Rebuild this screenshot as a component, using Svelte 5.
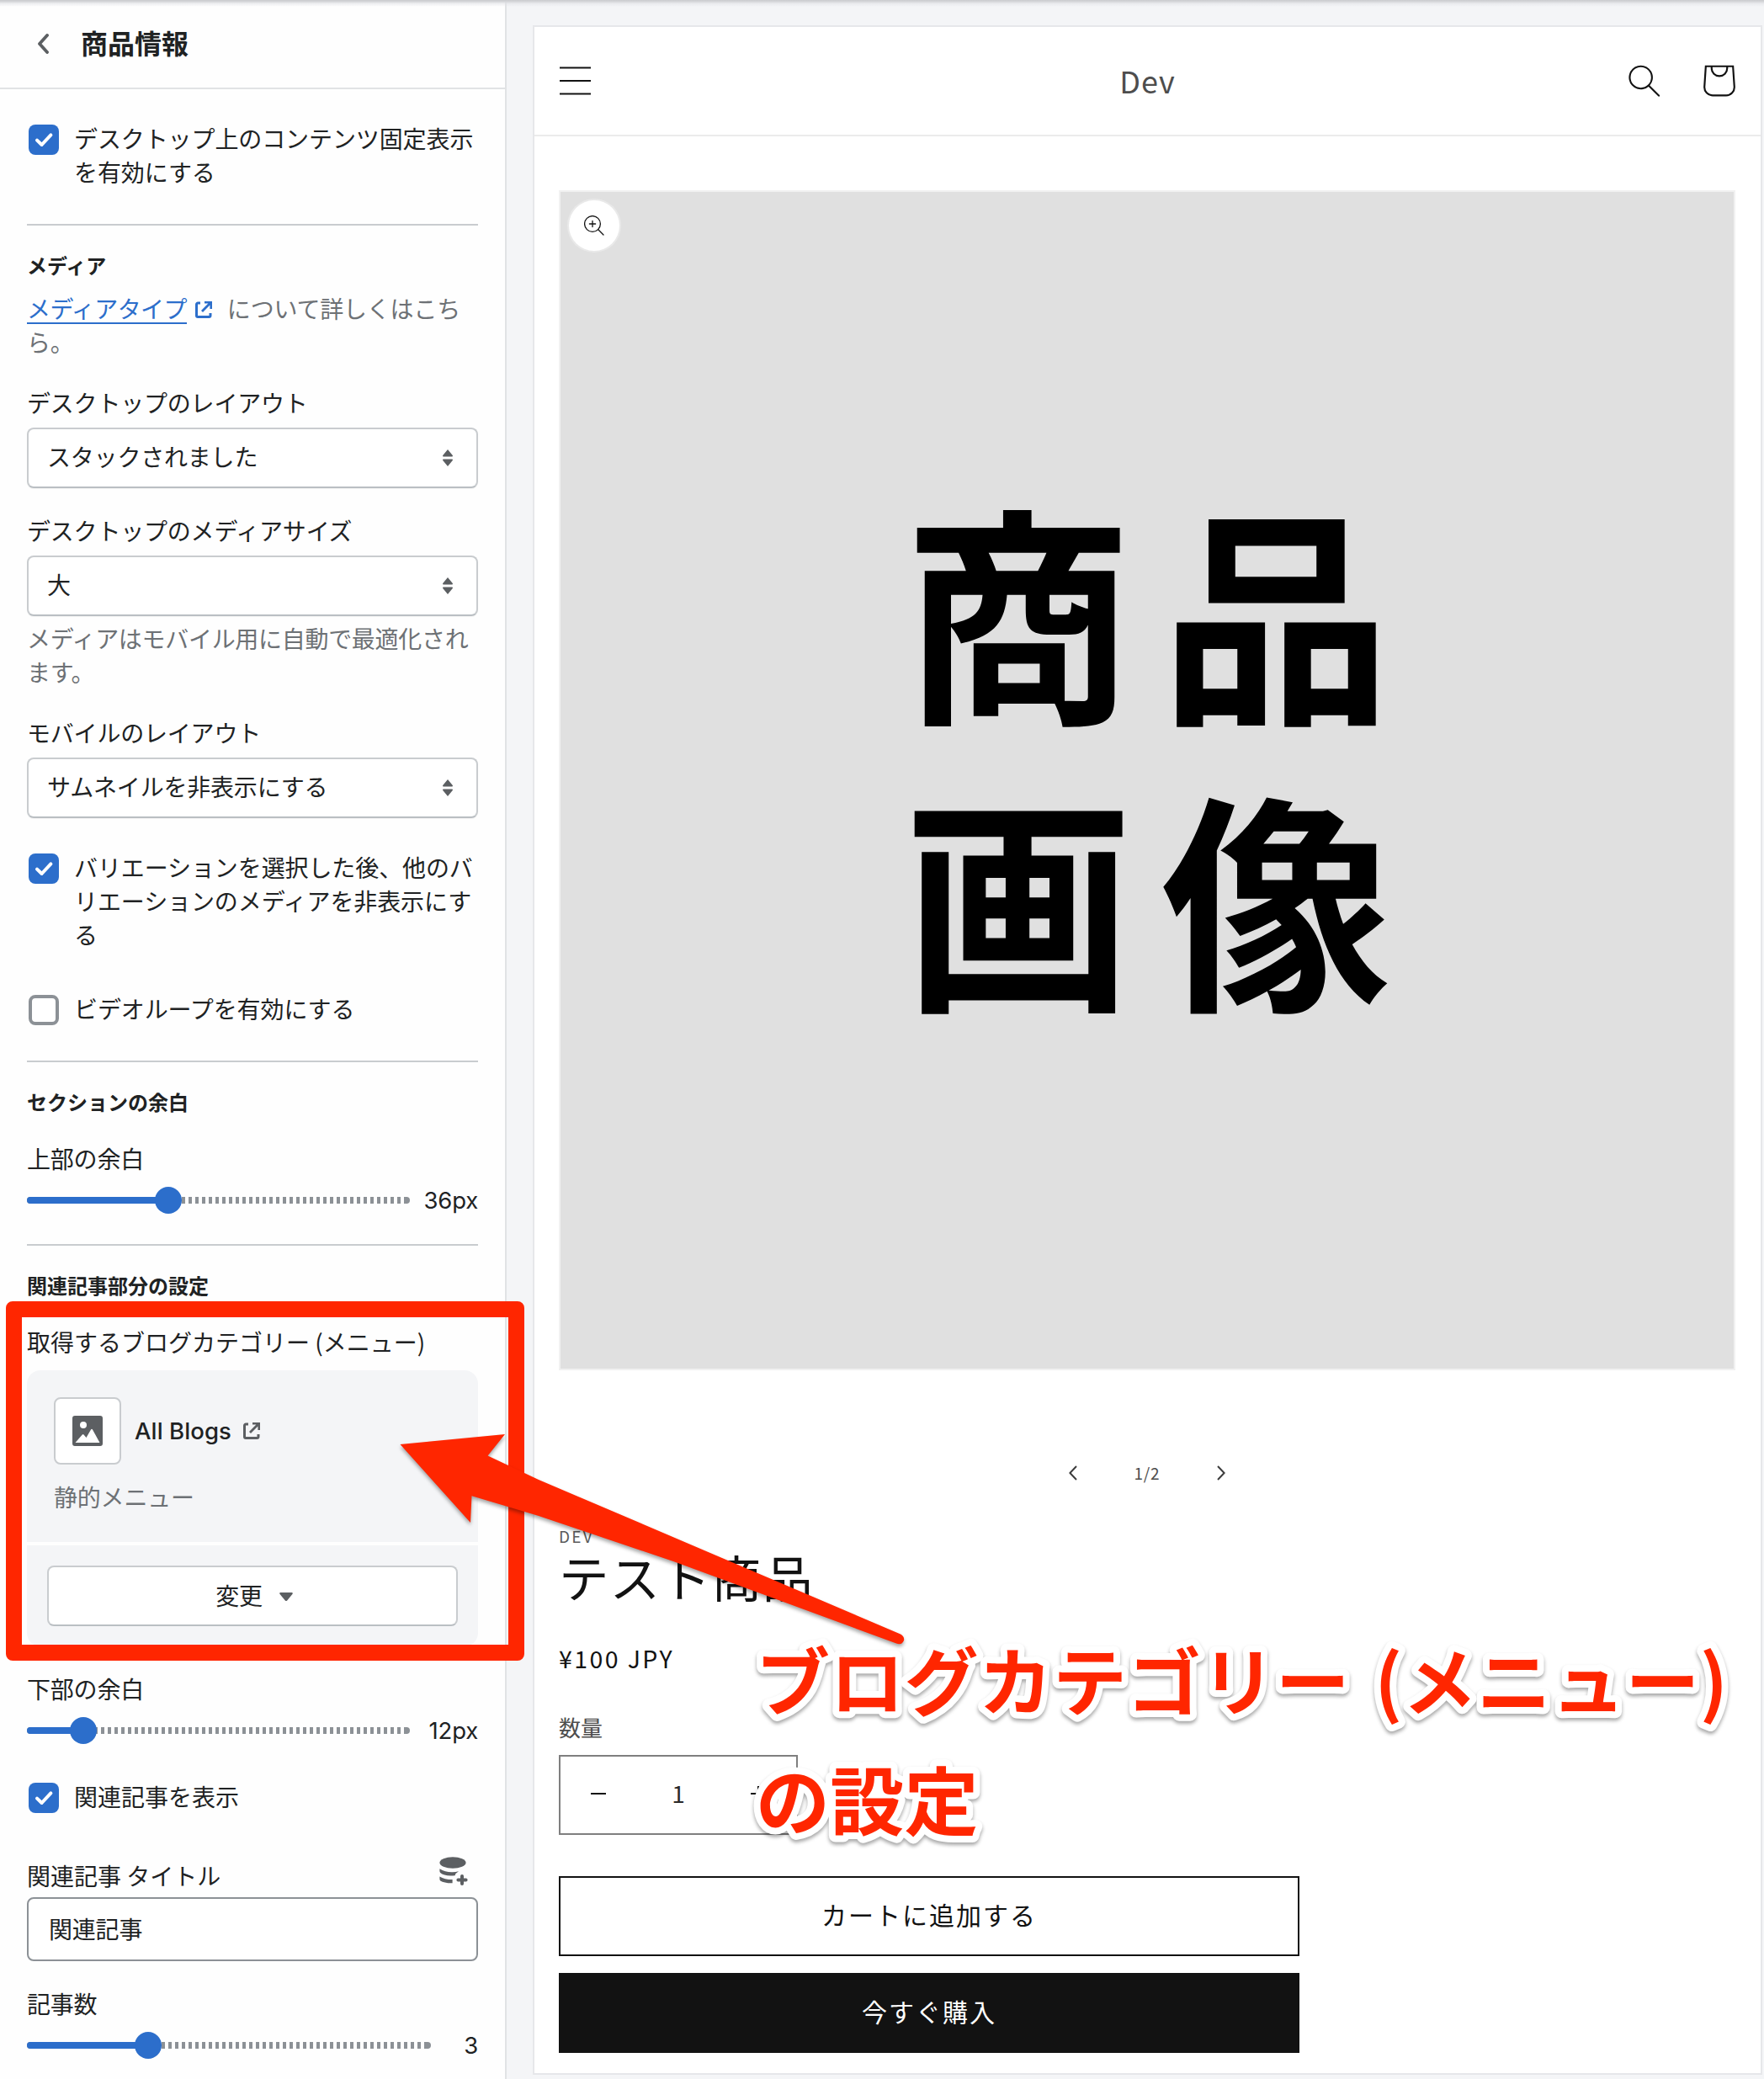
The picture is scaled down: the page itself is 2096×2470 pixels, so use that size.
<script>
  const selects = {
    desktop: 'スタックされました',
    size: '大',
    mobile: 'サムネイルを非表示にする'
  };
</script>

{#snippet check(on)}
  <span class="box" class:on>
    {#if on}
      <svg viewBox="0 0 36 36"><path d="M10 18.6 L15.6 24 L26.4 12.4" fill="none" stroke="#fff" stroke-width="4" stroke-linecap="round" stroke-linejoin="round" /></svg>
    {/if}
  </span>
{/snippet}

{#snippet external()}
  <svg class="ext" viewBox="0 0 20 20">
    <path d="M6 2H3.2A1.7 1.7 0 0 0 1.5 3.7V17A1.5 1.5 0 0 0 3 18.5H16.3A1.7 1.7 0 0 0 18 16.8V14" fill="none" stroke="currentColor" stroke-width="3" />
    <path d="M11 0H20V9H17.4V4.6L9 13L7 11L15.4 2.6H11Z" fill="currentColor" />
  </svg>
{/snippet}

{#snippet select(text)}
  <div class="select">
    <span>{text}</span>
    <svg viewBox="0 0 12 20"><path d="M6 0L12 7.2Q12 8.5 11 8.5H1Q0 8.5 0 7.2ZM6 20L12 12.8Q12 11.5 11 11.5H1Q0 11.5 0 12.8Z" fill="#5c5f62" /></svg>
  </div>
{/snippet}

{#snippet slider(width, fill, value)}
  <div class="slider">
    <div class="track" style="width:{width}px">
      <div class="fill" style="width:{fill}px"></div>
      <div class="thumb" style="left:{fill - 16}px"></div>
    </div>
    <span class="value">{value}</span>
  </div>
{/snippet}

<div class="page">
  <aside>
    <header>
      <svg class="back" viewBox="0 0 14 24"><path d="M12 2L3 12L12 22" fill="none" stroke="#5c5f62" stroke-width="3.8" stroke-linecap="round" stroke-linejoin="round" /></svg>
      <h1>商品情報</h1>
    </header>
    <div class="panel">
      <div class="check first">{@render check(true)}<p>デスクトップ上のコンテンツ固定表示<br />を有効にする</p></div>
      <hr class="g42" />
      <h2>メディア</h2>
      <p class="sub link-line"><a href="#media">メディアタイプ</a><span class="blue">{@render external()}</span>について詳しくはこち<br />ら。</p>
      <p class="label g32">デスクトップのレイアウト</p>
      {@render select(selects.desktop)}
      <p class="label g30">デスクトップのメディアサイズ</p>
      {@render select(selects.size)}
      <p class="sub help">メディアはモバイル用に自動で最適化され<br />ます。</p>
      <p class="label g32">モバイルのレイアウト</p>
      {@render select(selects.mobile)}
      <div class="check g38">{@render check(true)}<p>バリエーションを選択した後、他のバ<br />リエーションのメディアを非表示にす<br />る</p></div>
      <div class="check g48">{@render check(false)}<p>ビデオループを有効にする</p></div>
      <hr class="g42" />
      <h2>セクションの余白</h2>
      <p class="label g30">上部の余白</p>
      {@render slider(455, 168, '36px')}
      <hr class="g36" />
      <h2>関連記事部分の設定</h2>
      <p class="label g30 plain">取得するブログカテゴリー (メニュー)</p>
      <div class="card-top">
        <div class="resource">
          <div class="thumbnail">
            <svg viewBox="0 0 36 36"><path fill="#5c5f62" fill-rule="evenodd" d="M3 0H33A3 3 0 0 1 36 3V33A3 3 0 0 1 33 36H3A3 3 0 0 1 0 33V3A3 3 0 0 1 3 0ZM13 7A4 4 0 1 0 13 15A4 4 0 1 0 13 7ZM3.5 32H32.5L24 16.5Q23 15 22 16.5L16.5 26L13.5 22.5Q12.6 21.5 11.8 22.5Z" /></svg>
          </div>
          <strong>All Blogs</strong>
          {@render external()}
        </div>
        <p class="sub">静的メニュー</p>
      </div>
      <div class="card-bottom">
        <div class="button">変更<svg viewBox="0 0 16 10"><path d="M1.2 0H14.8Q16.4 .4 15.4 2L9.2 9.4Q8 10.4 6.8 9.4L.6 2Q-.4 .4 1.2 0Z" fill="#5c5f62" /></svg></div>
      </div>
      <p class="label g30">下部の余白</p>
      {@render slider(455, 67, '12px')}
      <div class="check g42 plain">{@render check(true)}<p>関連記事を表示</p></div>
      <div class="title-row">
        <p class="label plain">関連記事 タイトル</p>
        <svg viewBox="0 0 34 34" fill="#5c5f62">
          <ellipse cx="16" cy="7" rx="15.6" ry="6.8" />
          <path d="M.4 14.2Q7 18.4 15 18.3Q19 18.4 23 17.3Q19.3 19.4 18.6 22.2Q6 23.4 1.2 19Q.4 18 .4 16.8ZM.4 23.4Q6 27 15.6 27V31.2Q6 31.4 1.2 28.4Q.4 27.4 .4 26.2Z" />
          <path d="M27 23V32M22.4 27.5H31.6" stroke="#5c5f62" stroke-width="4" stroke-linecap="round" />
        </svg>
      </div>
      <div class="input">関連記事</div>
      <p class="label g30">記事数</p>
      {@render slider(480, 144, '3')}
    </div>
  </aside>

  <main>
    <div class="shop">
      <div class="shop-header">
        <svg class="menu" viewBox="0 0 37 34"><path d="M.5 1.5H36.5M.5 17H36.5M.5 32.5H36.5" stroke="#121212" stroke-width="2" stroke-linecap="round" /></svg>
        <span class="brand">Dev</span>
        <div class="tools">
          <svg class="search" viewBox="0 0 18 19"><path fill="#121212" fill-rule="evenodd" d="M11.03 11.68A5.784 5.784 0 1 1 2.85 3.5a5.784 5.784 0 0 1 8.18 8.18zm.26 1.12a6.78 6.78 0 1 1 .72-.7l5.4 5.4a.5.5 0 1 1-.71.7l-5.41-5.4z" /></svg>
          <svg class="cart" viewBox="11.8 11.5 17.4 17.5"><path fill="#121212" fill-rule="evenodd" d="M15.75 11.8h-3.16l-.77 11.6a5 5 0 0 0 4.99 5.34h7.38a5 5 0 0 0 4.99-5.33L28.4 11.8zm0 1h-2.22l-.71 10.67a4 4 0 0 0 3.99 4.27h7.38a4 4 0 0 0 4-4.27l-.72-10.67h-2.22v.63a4.75 4.75 0 1 1-9.5 0zm8.5 0h-7.5v.63a3.75 3.75 0 1 0 7.5 0z" /></svg>
        </div>
      </div>
      <div class="content">
        <div class="media">
          <div class="zoom">
            <svg viewBox="0 0 24 24"><g fill="none" stroke="#121212" stroke-width="1.3" stroke-linecap="round"><circle cx="10" cy="10" r="9.4" /><path d="M16.8 16.8L23 23M10 6.4V13.6M6.4 10H13.6" /></g></svg>
          </div>
          <div class="placeholder"><span>商品</span><span>画像</span></div>
        </div>
        <div class="pager">
          <svg viewBox="0 0 10 18"><path d="M9 1L1.4 9L9 17" /></svg>
          <span>1/2</span>
          <svg viewBox="0 0 10 18"><path d="M1 1L8.6 9L1 17" /></svg>
        </div>
        <p class="vendor">DEV</p>
        <p class="name">テスト商品</p>
        <p class="price">¥100 JPY</p>
        <p class="qty-label">数量</p>
        <div class="qty">
          <svg viewBox="0 0 18 18"><path d="M0 9H18" /></svg>
          <span>1</span>
          <svg viewBox="0 0 18 18"><path d="M0 9H18M9 0V18" /></svg>
        </div>
        <div class="buy outline">カートに追加する</div>
        <div class="buy solid">今すぐ購入</div>
      </div>
    </div>
  </main>

  <div class="topshade"></div>
  <div class="frame"></div>
  <svg class="notes" viewBox="0 0 2096 2470">
    <path class="arrow" d="M475.5 1716L600 1704L579.6 1729.5L640 1758L841 1843.7L1070 1941.5Q1075 1944.5 1074 1949Q1071.500 1955 1065 1952.500L800 1855L640 1801L560.500 1777.300L559 1809Z" />
    <g class="caption">
      <text x="898" y="2031">ブログカテゴリー (メニュー)</text>
      <text x="898" y="2173">の設定</text>
    </g>
  </svg>
</div>

<style>
  :global(body) { margin: 0; background: #f4f5f8; }
  .page {
    position: relative; width: 2096px; height: 2470px; overflow: hidden;
    display: flex; background: #f4f5f7;
    font-family: "Noto Sans CJK JP", sans-serif; color: #202223;
  }
  .page :global(*) { box-sizing: border-box; }
  svg { display: block; flex: none; }
  p, h1, h2 { margin: 0; white-space: nowrap; }
  aside { width: 602px; height: 2470px; background: #fefefe; border-right: 2px solid #e1e3e5; font-size: 28px; line-height: 40px; letter-spacing: -.2px; flex: none; }
  header { height: 106px; border-bottom: 2px solid #e1e3e5; display: flex; align-items: center; padding-left: 44px; }
  .back { width: 14px; height: 24px; margin-right: 38px; }
  h1 { font-size: 32px; line-height: 40px; font-weight: 700; letter-spacing: 0; margin-bottom: 4px; }
  .panel { padding: 38px 32px 0; }
  .check { display: flex; gap: 18px; padding-left: 2px; letter-spacing: -.1px; }
  .box { width: 36px; height: 36px; border-radius: 8px; border: 4px solid #8c9196; background: #fff; margin-top: 4px; flex: none; }
  .box.on { border: 0; background: #2c6ecb; }
  hr { border: 0; height: 2px; background: #c9cccf; margin: 0 0 30px; }
  h2 { font-size: 24px; line-height: 34px; font-weight: 700; letter-spacing: 0; }
  .plain { letter-spacing: 0; }
  .g30 { margin-top: 30px; }
  .g32 { margin-top: 32px; }
  .g36 { margin-top: 36px; }
  .g38 { margin-top: 38px; }
  .g42 { margin-top: 42px; }
  .g48 { margin-top: 48px; }
  .sub { color: #6d7175; }
  .link-line { margin-top: 14px; }
  a { color: #2c6ecb; letter-spacing: -.6px; text-decoration: none; border-bottom: 2px solid #2c6ecb; display: inline-block; line-height: 34px; }
  .blue { color: #2c6ecb; display: inline-block; margin: 0 18px 0 10px; }
  .ext { width: 20px; height: 20px; }
  .select {
    margin-top: 10px; height: 72px; border: 2px solid #c9cccf; border-bottom-color: #babfc3; border-radius: 8px;
    display: flex; align-items: center; justify-content: space-between; padding: 0 28px 4px 22px; background: #fff;
    box-shadow: 0 1px 1px rgba(0,0,0,.05);
  }
  .select svg { width: 12px; height: 20px; margin-top: 3px; }
  .help { margin-top: 6px; letter-spacing: -.3px; }
  .slider { margin-top: 14px; height: 32px; display: flex; align-items: center; justify-content: space-between; }
  .track { position: relative; height: 8px; border-radius: 4px; background: repeating-linear-gradient(90deg, #8c9196 0 4px, #fefefe 4px 8px); }
  .track::after { content: ""; position: absolute; right: 0; top: 0; width: 7px; height: 8px; border-radius: 0 4px 4px 0; background: #8c9196; }
  .fill { height: 8px; border-radius: 4px; background: #2c6ecb; }
  .thumb { position: absolute; top: -12px; width: 32px; height: 32px; border-radius: 50%; background: #2c6ecb; }
  .value { font-family: Inter, sans-serif; font-size: 27.500px; line-height: 32px; }
  .card-top { margin-top: 14px; height: 204px; background: #f4f5f7; border-radius: 16px 16px 0 0; padding: 32px 32px 0; }
  .resource { display: flex; align-items: center; }
  .thumbnail { width: 80px; height: 80px; border: 2px solid #c9cccf; border-radius: 8px; background: #fff; display: flex; align-items: center; justify-content: center; margin-right: 16px; }
  .thumbnail svg { width: 36px; height: 36px; }
  strong { font-family: Inter, sans-serif; font-size: 27.500px; font-weight: 500; letter-spacing: .1px; margin-right: 14px; white-space: nowrap; }
  .resource .ext { color: #5c5f62; }
  .card-top .sub { margin-top: 18px; }
  .card-bottom { margin-top: 4px; height: 120px; background: #f4f5f7; border-radius: 0 0 16px 16px; padding: 24px; }
  .button { height: 72px; border: 2px solid #c9cccf; border-bottom-color: #babfc3; border-radius: 8px; background: #fff; display: flex; align-items: center; justify-content: center; gap: 20px; padding: 0 0 3px 4px; }
  .button svg { width: 16px; height: 10px; margin-top: 4px; }
  .title-row { margin-top: 52px; height: 41px; display: flex; justify-content: space-between; }
  .title-row .label { margin-top: 2px; }
  .title-row svg { width: 34px; height: 34px; margin-right: 12px; }
  .input { margin-top: 7px; height: 76px; border: 2px solid #8c9196; border-radius: 8px; padding: 15px 24px; background: #fff; }

  main { flex: 1; padding: 30px 2px 0 31px; }
  .shop { height: 2435px; border: 2px solid #e6e7ea; background: #fff; color: #121212; }
  .shop-header { height: 130px; border-bottom: 2px solid #ebebeb; display: grid; grid-template-columns: 1fr auto 1fr; align-items: center; padding: 0 30px; }
  .menu { width: 37px; height: 34px; }
  .brand { font-size: 36px; line-height: 48px; letter-spacing: .9px; color: #4d4d4d; margin-bottom: 2px; }
  .tools { display: flex; justify-content: flex-end; align-items: center; gap: 50px; }
  .search { width: 40px; height: 40px; }
  .cart { width: 38px; height: 38px; }
  .content { padding: 64px 30px 0 29px; }
  .media { position: relative; width: 1398px; height: 1402px; background: #e0e0e0; border: 2px solid #f1f1f1; }
  .zoom { position: absolute; left: 10px; top: 10px; width: 60px; height: 60px; border-radius: 50%; background: #fff; box-shadow: 0 0 0 2px #e9e9e9; display: flex; align-items: center; justify-content: center; }
  .zoom svg { width: 24px; height: 24px; }
  .placeholder { display: flex; flex-direction: column; padding: 321px 0 0 407px; color: #000; font-weight: 700; font-size: 274px; line-height: 341px; letter-spacing: 32px; }
  .pager { display: flex; justify-content: center; align-items: center; margin-top: 106px; height: 32px; color: #4d4d4d; font-size: 19px; letter-spacing: .8px; }
  .pager svg { width: 10px; height: 18px; fill: none; stroke: #3d3d3d; stroke-width: 2; }
  .pager span { width: 166px; text-align: center; line-height: 32px; }
  .vendor { margin-top: 43px; font-size: 19px; line-height: 32px; letter-spacing: 2.2px; color: #5a5a5a; }
  .name { margin-top: -4px; font-size: 59.500px; line-height: 70px; letter-spacing: 1px; }
  .price { margin-top: 43px; font-size: 28.500px; line-height: 40px; letter-spacing: 2.4px; }
  .qty-label { margin-top: 44px; font-size: 26px; line-height: 36px; color: #4d4d4d; }
  .qty { margin-top: 15px; width: 284px; height: 95px; border: 2px solid #7f7f7f; display: flex; align-items: center; justify-content: space-between; padding: 0 36px 3px; font-size: 28px; line-height: 40px; color: #2a2a2a; }
  .qty span { margin-bottom: 3px; }
  .qty svg { width: 18px; height: 18px; stroke: #121212; stroke-width: 2; }
  .buy { width: 880px; height: 95px; font-size: 30px; letter-spacing: 2px; display: flex; align-items: center; justify-content: center; padding-bottom: 5px; }
  .outline { margin-top: 49px; border: 2px solid #121212; }
  .solid { margin-top: 20px; background: #121212; color: #fff; }

  .topshade { position: absolute; inset: 0 0 auto 0; height: 8px; background: linear-gradient(#c9cacd 0, #d6d7da 2px, rgba(225,226,230,.6) 4px, rgba(240,240,244,0) 8px); }
  .frame { position: absolute; left: 7px; top: 1546px; width: 616px; height: 427px; border: 19px solid #ff2600; border-radius: 8px; }
  .notes { position: absolute; left: 0; top: 0; width: 2096px; height: 2470px; }
  .arrow { fill: #ff2600; filter: drop-shadow(0 3px 2px rgba(0,0,0,.35)); }
  .caption { font-size: 88px; font-weight: 700; fill: #ff2600; stroke: #fff; stroke-width: 16px; stroke-linejoin: round; paint-order: stroke; word-spacing: 9px; letter-spacing: .25px; filter: drop-shadow(0 3px 2px rgba(0,0,0,.35)); }
</style>
